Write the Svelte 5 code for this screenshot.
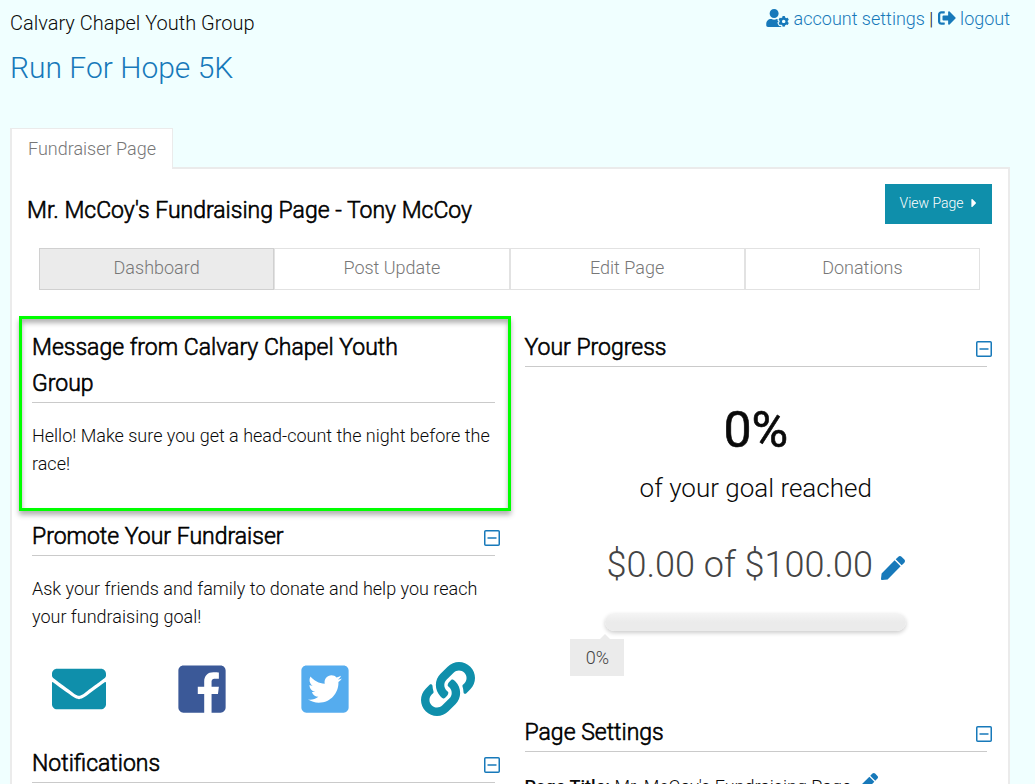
<script>
  const org = 'Calvary Chapel Youth Group';
  const tabs = ['Dashboard', 'Post Update', 'Edit Page', 'Donations'];

  let active = $state('Dashboard');
  let open = $state({ promote: true, notifications: true, progress: true, settings: true });
  let raised = $state(0);
  let goal = $state(100);
  let percent = $derived(Math.round((raised / goal) * 100));

  const icons = {
    userCog: {
      box: '0 0 640 512',
      path: 'M610.5 373.3c2.6-14.1 2.6-28.5 0-42.6l25.8-14.9c3-1.7 4.3-5.2 3.3-8.5-6.7-21.6-18.2-41.2-33.2-57.4-2.3-2.5-6-3.1-9-1.4l-25.8 14.9c-10.9-9.3-23.4-16.5-36.9-21.3v-29.8c0-3.4-2.4-6.4-5.7-7.1-22.3-5-45-4.8-66.2 0-3.3.7-5.7 3.7-5.7 7.1v29.8c-13.5 4.8-26 12-36.9 21.3l-25.8-14.9c-2.9-1.7-6.7-1.1-9 1.4-15 16.2-26.5 35.8-33.2 57.4-1 3.3.4 6.8 3.3 8.5l25.8 14.9c-2.6 14.1-2.6 28.5 0 42.6l-25.8 14.9c-3 1.7-4.3 5.2-3.3 8.5 6.7 21.6 18.2 41.1 33.2 57.4 2.3 2.5 6 3.1 9 1.4l25.8-14.9c10.9 9.3 23.4 16.5 36.9 21.3v29.8c0 3.4 2.4 6.4 5.7 7.1 22.3 5 45 4.8 66.2 0 3.3-.7 5.7-3.7 5.7-7.1v-29.8c13.5-4.8 26-12 36.9-21.3l25.8 14.9c2.9 1.7 6.7 1.1 9-1.4 15-16.2 26.5-35.8 33.2-57.4 1-3.3-.4-6.8-3.3-8.5l-25.8-14.9zM496 400.5c-26.8 0-48.5-21.8-48.5-48.5s21.8-48.5 48.5-48.5 48.5 21.8 48.5 48.5-21.7 48.5-48.5 48.5zM224 256c70.7 0 128-57.3 128-128S294.7 0 224 0 96 57.3 96 128s57.3 128 128 128zm201.2 226.5c-2.3-1.2-4.6-2.6-6.8-3.9l-7.9 4.6c-6 3.4-12.8 5.3-19.6 5.3-10.9 0-21.4-4.6-28.9-12.6-18.3-19.8-32.3-43.9-40.2-69.6-5.5-17.7 1.9-36.4 17.9-45.7l7.9-4.6c-.1-2.6-.1-5.2 0-7.8l-7.9-4.6c-16-9.2-23.4-28-17.9-45.7.9-2.9 2.2-5.8 3.2-8.7-3.8-.3-7.5-1.2-11.4-1.2h-16.7c-22.2 10.2-46.9 16-72.9 16s-50.6-5.8-72.9-16h-16.7C60.2 288 0 348.2 0 422.4V464c0 26.5 21.5 48 48 48h352c10.1 0 19.5-3.2 27.2-8.5-1.2-3.8-2-7.7-2-11.8v-9.2z'
    },
    signOut: {
      box: '0 0 512 512',
      path: 'M497 273L329 441c-15 15-41 4.5-41-17v-96H152c-13.3 0-24-10.7-24-24v-96c0-13.3 10.7-24 24-24h136V88c0-21.4 25.9-32 41-17l168 168c9.3 9.4 9.3 24.6 0 34zM192 436v-40c0-6.6-5.4-12-12-12H96c-17.7 0-32-14.3-32-32V160c0-17.7 14.3-32 32-32h84c6.6 0 12-5.4 12-12V76c0-6.6-5.4-12-12-12H96c-53 0-96 43-96 96v192c0 53 43 96 96 96h84c6.6 0 12-5.4 12-12z'
    },
    caret: {
      box: '0 0 192 512',
      path: 'M0 384.662V127.338c0-17.818 21.543-26.741 34.142-14.142l128.662 128.662c7.81 7.81 7.81 20.474 0 28.284L34.142 398.804C21.543 411.404 0 402.48 0 384.662z'
    },
    pen: {
      box: '0 0 512 512',
      path: 'M290.74 93.24l128.02 128.02-277.99 277.99-114.14 12.6C11.35 513.54-1.56 500.62.14 485.34l12.7-114.22 277.9-277.88zm207.2-19.06l-60.11-60.11c-18.75-18.75-49.16-18.75-67.91 0l-56.55 56.55 128.02 128.02 56.55-56.55c18.75-18.76 18.75-49.16 0-67.91z'
    }
  };

  const shares = [
    {
      name: 'email',
      label: 'Share by email',
      box: '0 0 512 512',
      path: 'M502.3 190.8c3.9-3.1 9.7-.2 9.7 4.7V400c0 26.5-21.5 48-48 48H48c-26.5 0-48-21.5-48-48V195.6c0-5 5.7-7.8 9.7-4.7 22.4 17.4 52.1 39.5 154.1 113.6 21.1 15.4 56.7 47.8 92.2 47.6 35.7.3 72-32.8 92.3-47.6 102-74.1 131.6-96.3 154-113.7zM256 320c23.2.4 56.6-29.2 73.4-41.4 132.7-96.3 142.8-104.7 173.4-128.7 5.8-4.5 9.2-11.5 9.2-18.9v-19c0-26.5-21.5-48-48-48H48c-26.5 0-48 21.5-48 48v19c0 7.4 3.4 14.3 9.2 18.9 30.6 23.9 40.7 32.4 173.4 128.7 16.8 12.2 50.2 41.8 73.4 41.4z'
    },
    {
      name: 'facebook',
      label: 'Share on Facebook',
      box: '0 0 448 512',
      path: 'M448 80v352c0 26.5-21.5 48-48 48h-85.3V302.8h60.6l8.7-67.6h-69.3V192c0-19.6 5.4-32.9 33.5-32.9H384V98.7c-6.2-.8-27.4-2.7-52.2-2.7-51.6 0-87 31.5-87 89.4v49.9H184v67.6h60.9V480H48c-26.5 0-48-21.5-48-48V80c0-26.5 21.5-48 48-48h352c26.5 0 48 21.5 48 48z'
    },
    {
      name: 'twitter',
      label: 'Share on Twitter',
      box: '0 0 448 512',
      path: 'M400 32H48C21.5 32 0 53.5 0 80v352c0 26.5 21.5 48 48 48h352c26.5 0 48-21.5 48-48V80c0-26.5-21.5-48-48-48zm-48.9 158.8c.2 2.8.2 5.7.2 8.5 0 86.7-66 186.6-186.6 186.6-37.2 0-71.7-10.8-100.7-29.4 5.3.6 10.4.8 15.8.8 30.7 0 58.9-10.4 81.4-28-28.8-.6-53-19.5-61.3-45.5 10.1 1.5 19.2 1.5 29.6-1.2-30-6.1-52.5-32.5-52.5-64.4v-.8c8.7 4.9 18.9 7.9 29.6 8.3a65.447 65.447 0 0 1-29.2-54.6c0-12.2 3.2-23.4 8.9-33.1 32.3 39.8 80.8 65.8 135.2 68.6-9.3-44.5 24-80.6 64-80.6 18.9 0 35.9 7.9 47.9 20.7 14.8-2.8 29-8.3 41.6-15.8-4.9 15.2-15.2 28-28.8 36.1 13.2-1.4 26-5.1 37.8-10.2-8.9 13.1-20.1 24.7-32.9 34z'
    },
    {
      name: 'link',
      label: 'Copy link',
      box: '0 0 512 512',
      path: 'M326.612 185.391c59.747 59.809 58.927 155.698.36 214.59-.11.12-.24.25-.36.37l-67.2 67.2c-59.27 59.27-155.699 59.262-214.96 0-59.27-59.26-59.27-155.7 0-214.96l37.106-37.106c9.84-9.84 26.786-3.3 27.294 10.606.648 17.722 3.826 35.527 9.69 52.721 1.986 5.822.567 12.262-3.783 16.612l-13.087 13.087c-28.026 28.026-28.905 73.66-1.155 101.96 28.024 28.579 74.086 28.749 102.325.51l67.2-67.19c28.191-28.191 28.073-73.757 0-101.83-3.701-3.694-7.429-6.564-10.341-8.569a16.037 16.037 0 0 1-6.947-12.606c-.396-10.567 3.348-21.456 11.698-29.806l21.054-21.055c5.521-5.521 14.182-6.199 20.584-1.731a152.482 152.482 0 0 1 20.522 17.197zM467.547 44.449c-59.261-59.262-155.69-59.27-214.96 0l-67.2 67.2c-.12.12-.25.25-.36.37-58.566 58.892-59.387 154.781.36 214.59a152.454 152.454 0 0 0 20.521 17.196c6.402 4.468 15.064 3.789 20.584-1.731l21.054-21.055c8.35-8.35 12.094-19.239 11.698-29.806a16.037 16.037 0 0 0-6.947-12.606c-2.912-2.005-6.64-4.875-10.341-8.569-28.073-28.073-28.191-73.639 0-101.83l67.2-67.19c28.239-28.239 74.3-28.069 102.325.51 27.75 28.3 26.872 73.934-1.155 101.96l-13.087 13.087c-4.35 4.35-5.769 10.79-3.783 16.612 5.864 17.194 9.042 34.999 9.69 52.721.509 13.906 17.454 20.446 27.294 10.606l37.106-37.106c59.271-59.259 59.271-155.699.001-214.959z'
    }
  ];
</script>

{#snippet icon(i, size)}
  <svg class="icon {size}" viewBox={i.box} aria-hidden="true"><path d={i.path} /></svg>
{/snippet}

{#snippet heading(title, key)}
  <div class="heading">
    <h2>{title}</h2>
    <button class="toggle" aria-label="Toggle {title}" aria-expanded={open[key]} onclick={() => (open[key] = !open[key])}>
      <svg viewBox="0 0 16 16" aria-hidden="true">
        <rect x="0.75" y="0.75" width="14.5" height="14.5" rx="1" />
        <path d={open[key] ? 'M3.5 8h9' : 'M3.5 8h9M8 3.5v9'} />
      </svg>
    </button>
  </div>
{/snippet}

<div class="page">
  <header>
    <div>
      <div class="org">{org}</div>
      <h1><a href="#event">Run For Hope 5K</a></h1>
    </div>
    <div class="account">
      <a href="#account">{@render icon(icons.userCog, 'wide')} account settings</a>
      |
      <a href="#logout">{@render icon(icons.signOut, 'small')} logout</a>
    </div>
  </header>

  <a class="page-tab" href="#fundraiser">Fundraiser Page</a>

  <main>
    <div class="title-row">
      <h2>Mr. McCoy's Fundraising Page - Tony McCoy</h2>
      <a class="view" href="#view">View Page {@render icon(icons.caret, 'caret')}</a>
    </div>

    <nav>
      {#each tabs as tab}
        <button class:active={active === tab} onclick={() => (active = tab)}>{tab}</button>
      {/each}
    </nav>

    <div class="columns">
      <div class="column">
        <section class="message">
          <div class="heading"><h2>Message from {org}</h2></div>
          <p>Hello! Make sure you get a head-count the night before the race!</p>
        </section>

        <section>
          {@render heading('Promote Your Fundraiser', 'promote')}
          {#if open.promote}
            <p>Ask your friends and family to donate and help you reach your fundraising goal!</p>
            <div class="shares">
              {#each shares as share}
                <a class={share.name} href="#{share.name}" aria-label={share.label}>{@render icon(share, 'share')}</a>
              {/each}
            </div>
          {/if}
        </section>

        <section>
          {@render heading('Notifications', 'notifications')}
        </section>
      </div>

      <div class="column">
        <section>
          {@render heading('Your Progress', 'progress')}
          {#if open.progress}
            <div class="progress">
              <div class="percent">{percent}%</div>
              <div class="reached">of your goal reached</div>
              <div class="amount">
                <span>${raised.toFixed(2)} of ${goal.toFixed(2)}</span>
                <a href="#goal" aria-label="Edit goal">{@render icon(icons.pen, 'large')}</a>
              </div>
              <div class="bar">
                <div class="fill" style="width: {percent}%"></div>
                <div class="tip" style="left: {percent}%">{percent}%</div>
              </div>
            </div>
          {/if}
        </section>

        <section>
          {@render heading('Page Settings', 'settings')}
          {#if open.settings}
            <p class="setting">
              <strong>Page Title:</strong> Mr. McCoy's Fundraising Page
              <a href="#title" aria-label="Edit page title">{@render icon(icons.pen, 'medium')}</a>
            </p>
          {/if}
        </section>
      </div>
    </div>
  </main>
</div>

<style>
  :global(body) {
    background: #f0ffff;
  }
  .page {
    padding: 8px 25px 0 10px;
    font: 300 18px/28px Roboto, sans-serif;
    color: #0a0a0a;
  }
  h1, h2, p {
    margin: 0;
  }
  a {
    color: #1779ba;
    text-decoration: none;
  }
  button {
    font: inherit;
    cursor: pointer;
  }
  header {
    display: flex;
    justify-content: space-between;
    align-items: flex-start;
    height: 120px;
  }
  .org {
    font-size: 20px;
    line-height: 30px;
  }
  h1 {
    margin-top: 9px;
    font-weight: 300;
    font-size: 30px;
    line-height: 42px;
  }
  .account {
    line-height: 22px;
  }
  .icon {
    fill: currentColor;
    vertical-align: -2px;
    width: 18px;
    height: 18px;
  }
  .icon.wide {
    width: 23px;
  }
  .icon.medium {
    width: 20px;
    height: 20px;
  }
  .icon.large {
    width: 24px;
    height: 24px;
  }
  .icon.caret {
    width: 6px;
    height: 14px;
    margin-left: 4px;
  }
  .icon.share {
    display: block;
    width: 54px;
    height: 54px;
  }
  .page-tab {
    display: block;
    position: relative;
    width: fit-content;
    padding: 6px 16px;
    border: solid #ebebeb;
    border-width: 1px 1px 0 2px;
    margin-bottom: -2px;
    background: #fff;
    color: #777;
  }
  main {
    padding: 15px 21px 30px 20px;
    border: 2px solid #ebebeb;
    background: #fff;
  }
  h2 {
    font-weight: 300;
    font-size: 23px;
    line-height: 36px;
    color: #000;
    -webkit-text-stroke: 0.6px currentColor;
  }
  .title-row {
    display: flex;
    justify-content: space-between;
    align-items: flex-start;
    margin: 0 -5px 0 -5px;
  }
  .title-row h2 {
    padding-top: 9px;
  }
  .view {
    padding: 0 15px 2px;
    background: #0f8fab;
    color: #fff;
    font-size: 14px;
    line-height: 38px;
  }
  nav {
    display: flex;
    margin: 19px 7px 38px;
  }
  nav button {
    flex: 1;
    height: 42px;
    padding: 0 0 2px;
    border: 1px solid #e2e2e2;
    background: #fff;
    color: #777;
  }
  nav button.active {
    border-color: #d0d0d0;
    background: #ebebeb;
  }
  .columns {
    display: grid;
    grid-template-columns: 1fr 1fr;
    gap: 30px;
  }
  .heading {
    display: flex;
    justify-content: space-between;
    padding-top: 2px;
    border-bottom: 1px solid #cacaca;
    margin-bottom: 19px;
  }
  .toggle {
    width: 16px;
    height: 16px;
    padding: 0;
    border: 0;
    margin: 11px -5px 0 0;
    background: none;
  }
  .toggle svg {
    display: block;
    fill: none;
    stroke: #1779ba;
    stroke-width: 1.5;
  }
  .message {
    padding: 9px 13px 30px 10px;
    border: 3px solid #00ff00;
    margin: -12px -16px 6px -13px;
    box-shadow: 0 4px 5px rgba(0, 0, 0, 0.3), inset 0 4px 5px rgba(0, 0, 0, 0.3);
  }
  .message h2 {
    padding-right: 60px;
  }
  .shares {
    display: flex;
    margin: 31px -15px 28px;
  }
  .shares a {
    flex: 1;
    display: flex;
    justify-content: center;
    color: #0f8fab;
  }
  .shares .facebook {
    color: #3b5998;
  }
  .shares .twitter {
    color: #55acee;
  }
  .progress {
    text-align: center;
    color: #444;
  }
  .percent {
    padding-top: 12px;
    color: #0a0a0a;
    font-weight: 400;
    font-size: 50px;
    line-height: 64px;
    -webkit-text-stroke: 0.6px currentColor;
  }
  .reached {
    margin-top: 8px;
    color: #0a0a0a;
    font-size: 26px;
    line-height: 36px;
  }
  .amount {
    display: flex;
    justify-content: center;
    align-items: center;
    gap: 8px;
    margin-top: 35px;
    font-size: 36px;
    line-height: 48px;
  }
  .amount a {
    padding-top: 4px;
    line-height: 24px;
  }
  .bar {
    position: relative;
    width: 65%;
    height: 18px;
    border-radius: 9px;
    margin: 24px auto 82px;
    background: linear-gradient(#f5f5f5, #ebebeb 50%);
    box-shadow: 0 2px 4px rgba(0, 0, 0, 0.2);
  }
  .fill {
    height: 100%;
    border-radius: 9px;
    background: #0f8fab;
  }
  .tip {
    position: absolute;
    top: 26px;
    width: 54px;
    margin-left: -35px;
    background: #ebebeb;
    line-height: 37px;
  }
  .tip::before {
    content: '';
    position: absolute;
    top: -5px;
    left: 30px;
    border: solid transparent;
    border-width: 0 5px 5px;
    border-bottom-color: #ebebeb;
  }
  .setting {
    line-height: 32px;
  }
  .setting .icon {
    margin-left: 2px;
    vertical-align: 0;
  }
  strong {
    font-weight: 500;
  }
</style>
